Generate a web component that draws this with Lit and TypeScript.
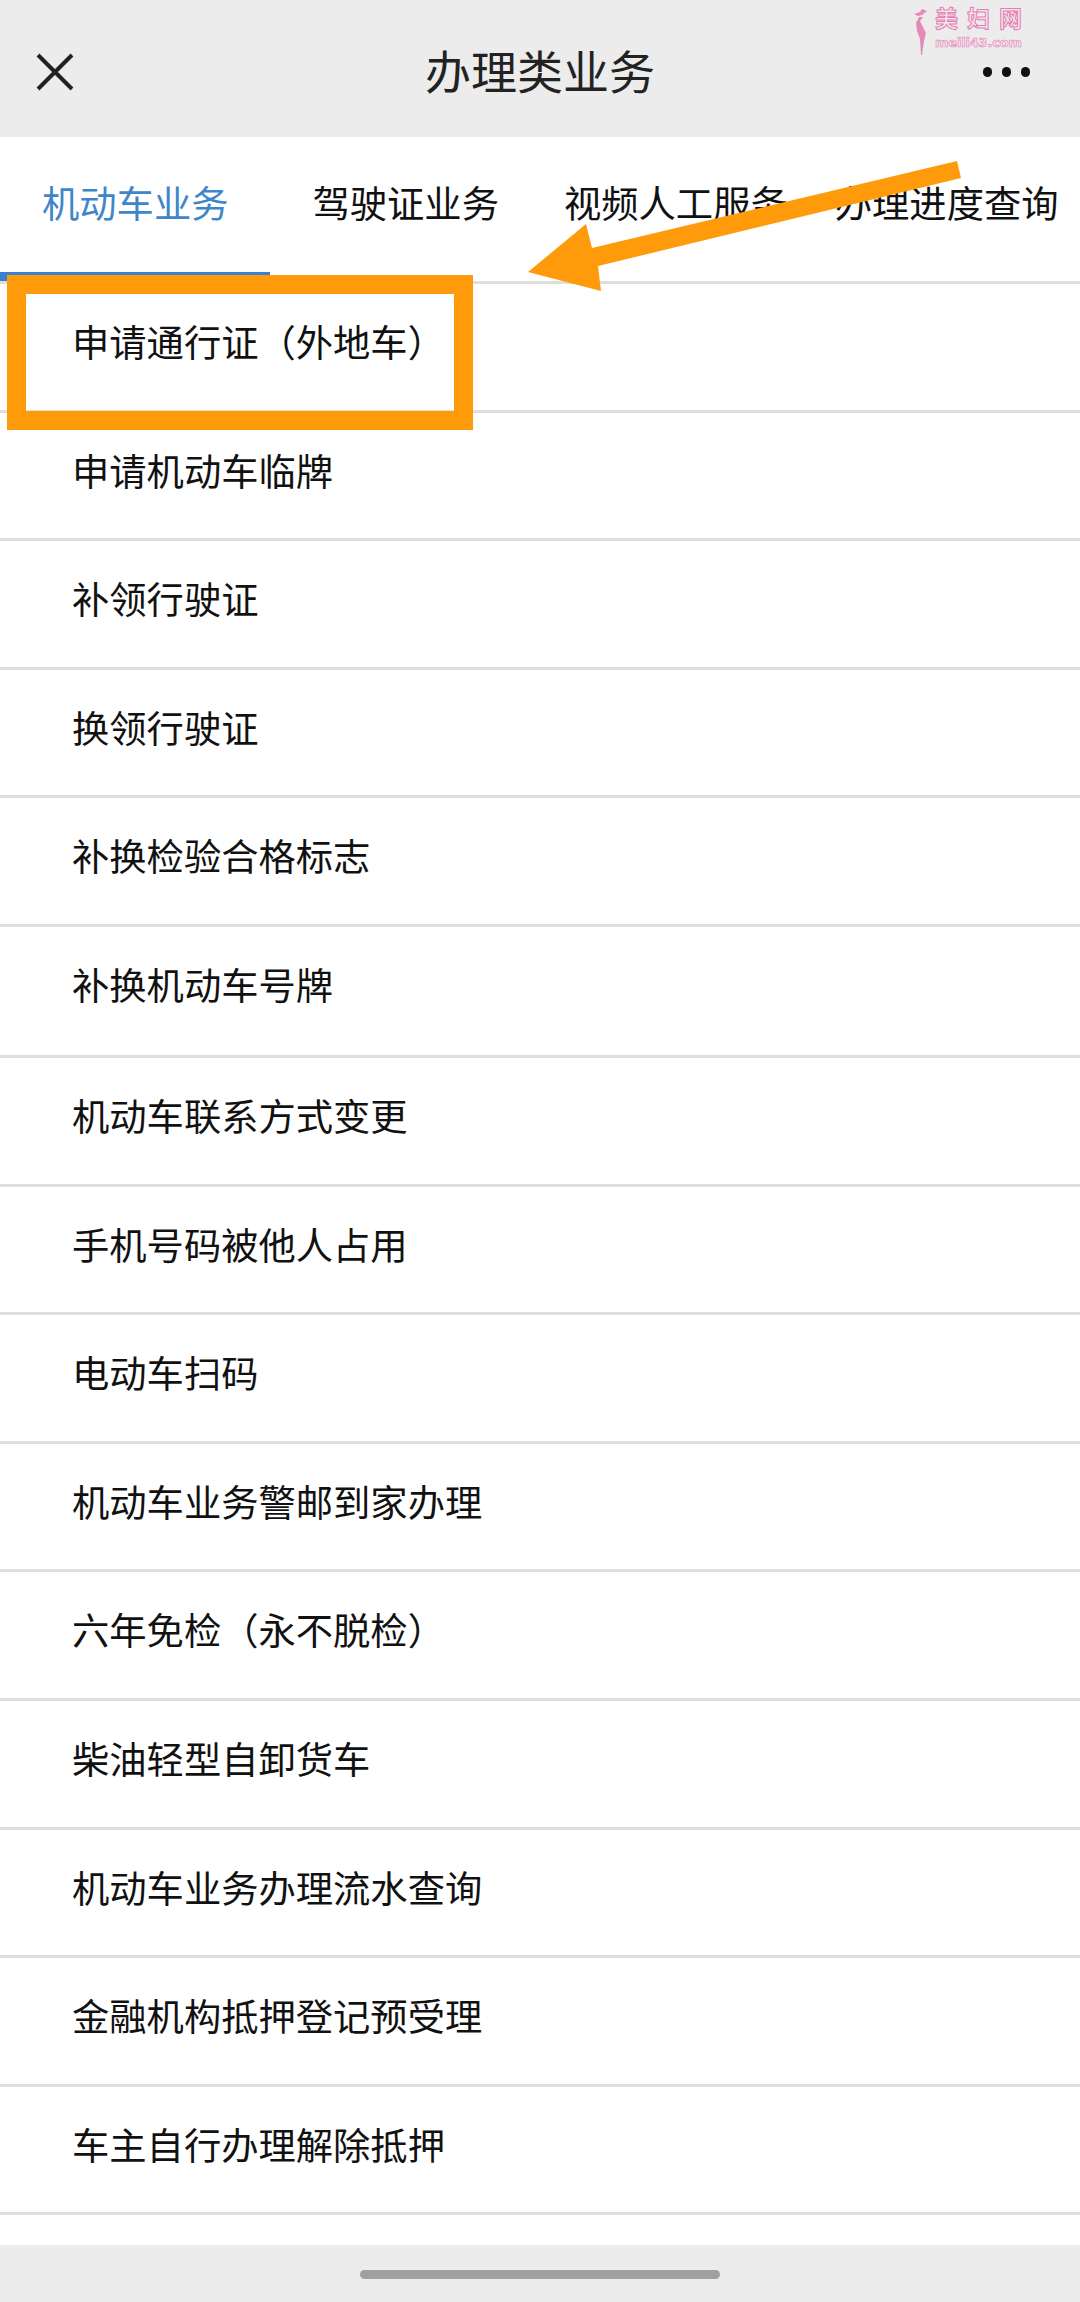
import {LitElement, html, css, svg} from 'lit';
import {customElement} from 'lit/decorators.js';

const TABS = ['机动车业务', '驾驶证业务', '视频人工服务', '办理进度查询'];

const ROWS = [
  '申请通行证（外地车）',
  '申请机动车临牌',
  '补领行驶证',
  '换领行驶证',
  '补换检验合格标志',
  '补换机动车号牌',
  '机动车联系方式变更',
  '手机号码被他人占用',
  '电动车扫码',
  '机动车业务警邮到家办理',
  '六年免检（永不脱检）',
  '柴油轻型自卸货车',
  '机动车业务办理流水查询',
  '金融机构抵押登记预受理',
  '车主自行办理解除抵押',
];

@customElement('app-root')
export class AppRoot extends LitElement {
  static styles = css`
    :host {
      display: block;
      position: relative;
      width: 1080px;
      height: 2302px;
      overflow: hidden;
      background: #fff;
      font-family: "Liberation Sans", "Noto Sans CJK SC", sans-serif;
      color: #111;
    }

    .page {
      display: flex;
      flex-direction: column;
      height: 100%;
    }

    .header {
      flex: 0 0 137px;
      display: grid;
      grid-template-columns: 1fr auto 1fr;
      align-items: center;
      box-sizing: border-box;
      padding: 9px 50px 0 50px;
      background: #ececec;
    }

    .title {
      font-size: 46px;
      line-height: 60px;
      color: #222;
    }

    .close { width: 38px; height: 38px; display: block; margin: -2px 0 0 -14px; }

    .dots { display: flex; gap: 9.5px; justify-self: end; margin-top: -2px; }
    .dots i {
      width: 9.5px;
      height: 9.5px;
      border-radius: 50%;
      background: #111;
    }

    .tabs {
      flex: 0 0 147px;
      display: flex;
      box-sizing: border-box;
      border-bottom: 3px solid #dedede;
      white-space: nowrap;
      overflow: hidden;
    }

    .tab {
      box-sizing: border-box;
      height: 144px;
      padding: 46px 42px 0 42px;
      font-size: 37.3px;
      line-height: 44px;
    }
    .tab:nth-child(3) { padding-left: 23px; padding-right: 24px; }
    .tab:nth-child(4) { padding-left: 23px; padding-right: 0; }
    .tab.active {
      color: #3f86c8;
      border-bottom: 9px solid #3a80d2;
    }

    .list {
      flex: 1;
      min-height: 0;
      overflow: hidden;
    }

    .row {
      box-sizing: border-box;
      height: 128.5px;
      padding: 38px 0 0 72px;
      border-bottom: 3px solid #dedede;
      font-size: 37.3px;
      line-height: 44px;
    }
    .row:nth-child(6) { height: 131.5px; }
    .row:nth-child(n + 7) { height: 128.6px; }

    .footer {
      flex: 0 0 57px;
      display: flex;
      justify-content: center;
      box-sizing: border-box;
      padding-top: 25px;
      background: #ececec;
    }

    .pill {
      width: 360px;
      height: 9px;
      border-radius: 5px;
      background: #a0a0a0;
    }

    .highlight {
      position: absolute;
      left: 7px;
      top: 275px;
      width: 466px;
      height: 155px;
      box-sizing: border-box;
      border: 19px solid #ff9a0a;
    }

    .arrow {
      position: absolute;
      left: 0;
      top: 0;
      width: 1080px;
      height: 300px;
    }

    .mark {
      position: absolute;
      left: 913px;
      top: 9px;
      display: flex;
      gap: 7px;
    }
    .mark svg { width: 15px; height: 46px; display: block; }
    .mark-text {
      display: flex;
      flex-direction: column;
      gap: 6px;
      color: #f9e3ee;
    }
    .mark-name {
      font-size: 23px;
      line-height: 21px;
      font-weight: 700;
      letter-spacing: 9px;
      white-space: nowrap;
      width: 88px;
      -webkit-text-stroke: 1px #e07fb2;
    }
    .mark-url {
      font-family: "DejaVu Sans", sans-serif;
      font-size: 13px;
      line-height: 13px;
      font-weight: 700;
      letter-spacing: -0.2px;
      white-space: nowrap;
      -webkit-text-stroke: 0.6px #e07fb2;
    }
  `;

  override render() {
    return html`
      <div class="page">
        <div class="header">
          <svg class="close" viewBox="0 0 38 38">
            <path d="M2 2L36 36M36 2L2 36" stroke="#222" stroke-width="4" fill="none"></path>
          </svg>
          <div class="title">办理类业务</div>
          <div class="dots"><i></i><i></i><i></i></div>
        </div>
        <div class="tabs">
          ${TABS.map((t, i) => html`<div class="tab ${i === 0 ? 'active' : ''}">${t}</div>`)}
        </div>
        <div class="list">
          ${ROWS.map((r) => html`<div class="row">${r}</div>`)}
        </div>
        <div class="footer"><div class="pill"></div></div>
      </div>

      <div class="highlight"></div>
      <svg class="arrow" viewBox="0 0 1080 300">
        ${svg`<polygon fill="#ff9a0a" points="957,161 961,178 598,266 601,291 528,272 586,224 592,248"></polygon>`}
      </svg>
      <div class="mark">
        <svg viewBox="0 0 15 46">
          <path fill="#e58ab8" d="M1 5L7 3L9 0L14 2L9 6L5 7ZM6 8L10 8L7 12L10 18L13 24L11 32L9 46L8 46L7 30L4 22L3 14Z"></path>
        </svg>
        <div class="mark-text">
          <div class="mark-name">美妇网</div>
          <div class="mark-url">meili43.com</div>
        </div>
      </div>
    `;
  }
}
